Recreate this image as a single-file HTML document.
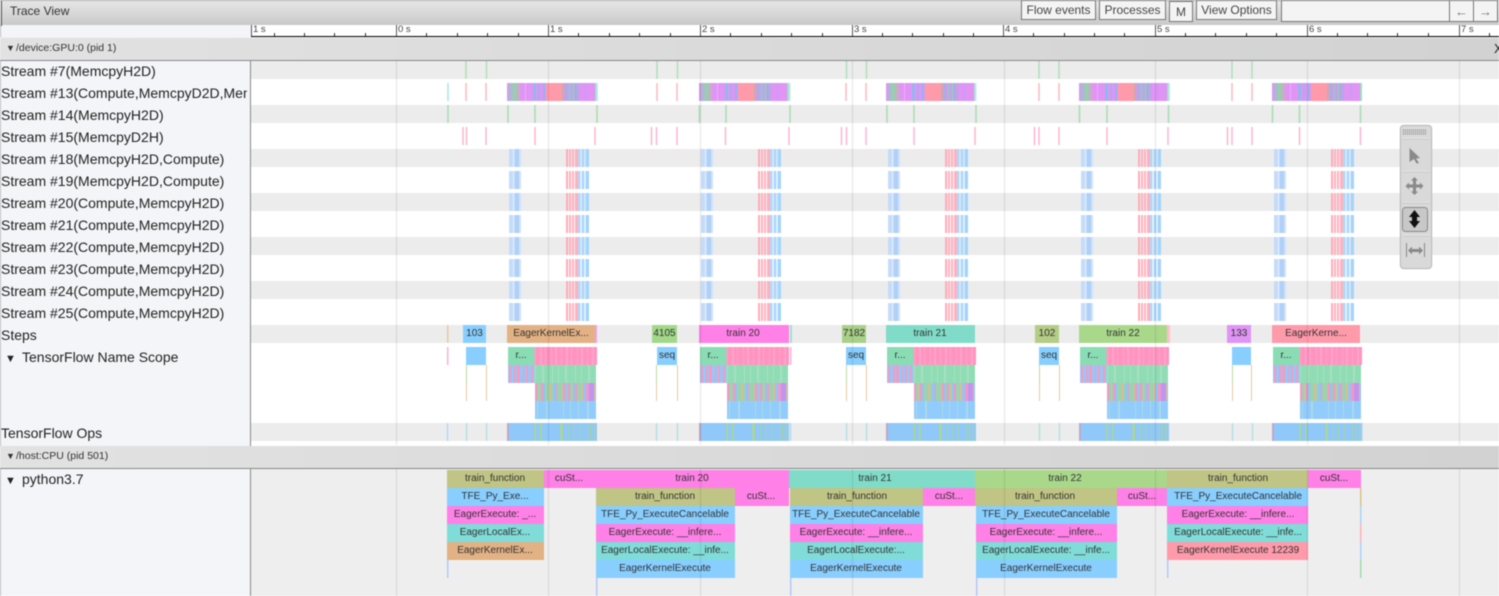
<!DOCTYPE html>
<html><head><meta charset="utf-8"><title>Trace View</title>
<style>
html,body{margin:0;padding:0;width:1499px;height:596px;overflow:hidden;background:#fff}
body{position:relative;font-family:"Liberation Sans",Arial,sans-serif;color:#222;filter:blur(.4px)}
.a{position:absolute}
#top{left:0;top:0;width:1499px;height:25px;background:linear-gradient(#e6e6e6,#c9c9c9);border-top:1px solid #aaa;box-sizing:border-box}
#top:before{content:"";position:absolute;left:1px;top:0;width:1px;height:25px;background:#555}
#title{left:10px;top:3px;font-size:12px;color:#333}
.b{position:absolute;box-sizing:border-box;background:#f4f4f4;border:1px solid #777;font-size:13px;color:#444;text-align:center;line-height:15px}
#left{left:0;top:25px;width:251px;height:571px;background:#f4f5f8;box-sizing:border-box;border-right:1px solid #888;border-left:1px solid #bbb}
.l{position:absolute;left:1px;font-size:14px;line-height:16px;color:#222;white-space:nowrap;width:246px;overflow:hidden}
.h{position:absolute;left:0;width:1499px;height:23px;background:linear-gradient(90deg,#e2e2e2,#d2d2d2);border-bottom:1px solid #888;box-sizing:border-box;font-size:10.5px;line-height:20px;color:#333}
.h span{position:absolute;left:16px;top:0;white-space:nowrap}
.h span.t{left:6px;font-size:9px}
#pal{left:1400px;top:125px;width:32px;height:144px;box-sizing:border-box;background:#d9d9d9;border:1px solid #bdbdbd;border-radius:4px;box-shadow:0 0 1px #aaa}
svg{position:absolute;left:0;top:0}
svg text{font-family:"Liberation Sans",Arial,sans-serif;font-size:10px;fill:#333;text-anchor:middle}
</style></head><body>
<div class="a" id="left"></div>
<svg width="1499" height="596" viewBox="0 0 1499 596">
<defs>
<g id="s"><rect x="2" width="12" height="18" fill="#c4dcfa"/><rect x="6" width="1" height="18" fill="#e4eefc"/><rect x="8" width="4" height="18" fill="#b0d0f8"/><rect x="12.500" width="1" height="18" fill="#d8e6fb"/>
<path d="M59 9H71" stroke="#ffb2be" stroke-width="18" stroke-dasharray="2 1 2 1 2 1 3"/><rect x="60" width="1" height="18" fill="#ffa4b4"/><path d="M71 9H83" stroke="#b0d8fc" stroke-width="18" stroke-dasharray="2.500 1 3 1 2"/><rect x="79" width="3" height="18" fill="#a4d4fc"/></g>
<g id="sr"><use href="#s" y="149"/><use href="#s" y="171"/><use href="#s" y="193"/><use href="#s" y="215"/><use href="#s" y="237"/><use href="#s" y="259"/><use href="#s" y="281"/><use href="#s" y="303"/></g>
<g id="m">
<rect y="83" width="90" height="18" fill="#e094f6"/>
<rect x="1" y="83" width="2" height="18" fill="#c4a8e0"/><rect x="3" y="83" width="7" height="18" fill="#a8bcd0"/><rect x="6" y="83" width="3" height="18" fill="#98d0a8"/><rect x="10" y="83" width="3" height="18" fill="#c8b0c0"/>
<rect x="18" y="83" width="1" height="18" fill="#ecb0f8"/><rect x="26" y="83" width="3" height="18" fill="#94b8ec"/><rect x="31" y="83" width="2" height="18" fill="#b0a8ec"/><rect x="36" y="83" width="2" height="18" fill="#94b4ec"/>
<rect x="39" y="83" width="16" height="18" fill="#ff9aaa"/><rect x="55" y="83" width="2" height="18" fill="#c8aca4"/>
<path d="M58 92H72" stroke="#a4b0dc" stroke-width="18" stroke-dasharray="2 1 3 1 1 1 3 1 1"/><rect x="62" y="83" width="1" height="18" fill="#a8c8c0"/><rect x="66" y="83" width="1" height="18" fill="#a8c8c0"/>
<rect x="78" y="83" width="1" height="18" fill="#c0a0f0"/><rect x="88" y="83" width="2" height="18" fill="#a0dcc0"/>
<rect y="347" x="1" width="27" height="18" fill="#8adcb4"/>
<rect y="347" x="27.500" width="62.500" height="18" fill="#ff94c0"/>
<path d="M28 356H90" stroke="#ffa4c8" stroke-width="18" stroke-dasharray="1 4 2 3 1 5 1 3 2 4"/>
<rect y="365" x="1" width="27" height="18" fill="#96c8f8"/>
<path d="M2 374H27" stroke="#f09cc4" stroke-width="18" stroke-dasharray="2 3 2 1 3 3 1 2 2 3"/>
<rect y="365" x="27.500" width="61.500" height="18" fill="#90dcb4"/>
<path d="M28 374H89" stroke="#a4e2c0" stroke-width="18" stroke-dasharray="1 6 2 8 1 5"/>
<rect y="383" x="28" width="61" height="18" fill="#98d4b0"/>
<path d="M28 392H89" stroke="#f496c8" stroke-width="18" stroke-dasharray="2 4 3 5 1 3 4 6 2 3"/>
<path d="M32 392H89" stroke="#dcbc90" stroke-width="18" stroke-dasharray="1 9 2 11 1 8"/>
<path d="M36 392H89" stroke="#94c4f4" stroke-width="18" stroke-dasharray="2 8 3 9 2 6"/>
<path d="M82 392H87" stroke="#c094f0" stroke-width="18"/>
<rect y="401" x="28" width="61" height="18" fill="#92ccfc"/>
<path d="M30 410H89" stroke="#a8d8e8" stroke-width="18" stroke-dasharray="1 8 2 15 1 6 1 7"/>
<rect y="423" width="90" height="18" fill="#90c8fa"/>
<rect y="423" x="0" width="2" height="18" fill="#c0a8c8"/>
<path d="M27 432H29M33 432H35M53 432H56M61 432H62M66 432H67M72 432H73M80 432H81M83 432H84M87 432H88" stroke="#a8d4a0" stroke-width="18"/>
</g>
</defs>
<!-- row bands -->
<g fill="#ececec"><rect x="251" y="61" width="1248" height="18"/><rect x="251" y="105" width="1248" height="18"/><rect x="251" y="149" width="1248" height="18"/><rect x="251" y="193" width="1248" height="18"/><rect x="251" y="237" width="1248" height="18"/><rect x="251" y="281" width="1248" height="18"/><rect x="251" y="325" width="1248" height="18"/><rect x="251" y="423" width="1248" height="18"/><rect x="251" y="469" width="1248" height="127" fill="#eee"/></g>
<!-- bursts -->
<use href="#sr" x="507"/><use href="#sr" x="699"/><use href="#sr" x="886"/><use href="#sr" x="1079"/><use href="#sr" x="1272"/>
<use href="#m" x="507"/><use href="#m" x="699"/><use href="#m" x="886"/><use href="#m" x="1079"/><use href="#m" x="1272"/>
<!-- stream 7 -->
<path d="M466 61V79M486.500 61V79M657 61V79M677.500 61V79M846.500 61V79M866.500 61V79M1039 61V79M1059 61V79M1232 61V79M1252 61V79" stroke="#b0e0ba" stroke-width="1.500"/>
<!-- stream 13 -->
<path d="M466 83V101M486 83V101M657 83V101M677 83V101M846 83V101M866 83V101M1039 83V101M1059 83V101M1232 83V101M1252 83V101" stroke="#ffb8c0" stroke-width="1.500"/>
<path d="M448 83V101M597 83V101M789.500 83V101M975.500 83V101M1169 83V101" stroke="#b8e8e6" stroke-width="1.800"/>
<!-- stream 14 -->
<path d="M448 105V123M508 105V123M535 105V123M597 105V123M699.500 105V123M726 105V123M790 105V123M887 105V123M914 105V123M976 105V123M1079.500 105V123M1107 105V123M1168.500 105V123M1272.500 105V123M1299.500 105V123M1360.500 105V123" stroke="#b0deb8" stroke-width="1.800"/>
<!-- stream 15 -->
<path d="M463 127V145M466.500 127V145M486 127V145M535 127V145M595 127V145M651.500 127V145M656.500 127V145M677 127V145M725.500 127V145M789 127V145M841.500 127V145M846.500 127V145M866 127V145M914 127V145M975 127V145M1034.500 127V145M1039 127V145M1059 127V145M1107 127V145M1168 127V145M1227.500 127V145M1232 127V145M1252 127V145M1299.500 127V145M1360.500 127V145" stroke="#ffb4d0" stroke-width="1.500"/>
<!-- steps -->
<rect x="447" y="325" width="1.500" height="18" fill="#e8c8a4"/><rect x="595" y="325" width="2" height="18" fill="#f0a0e8"/><rect x="790" y="325" width="2" height="18" fill="#a0e0d0"/><rect x="1167" y="325" width="3" height="18" fill="#ffc0c8"/>
<rect x="463" y="325" width="23" height="18" fill="#88ceff"/><text x="474.500" y="336">103</text>
<rect x="507" y="325" width="88" height="18" fill="#e2b184"/><text x="551" y="336">EagerKernelEx...</text>
<rect x="652" y="325" width="25" height="18" fill="#a2d88a"/><text x="664.500" y="336">4105</text>
<rect x="699" y="325" width="90" height="18" fill="#ff80e6"/><text x="743" y="336">train 20</text>
<rect x="842" y="325" width="24" height="18" fill="#a9d088"/><text x="854" y="336">7182</text>
<rect x="886" y="325" width="89" height="18" fill="#80dcc8"/><text x="930" y="336">train 21</text>
<rect x="1035" y="325" width="24" height="18" fill="#b4cc84"/><text x="1047" y="336">102</text>
<rect x="1079" y="325" width="88" height="18" fill="#a9d88a"/><text x="1123" y="336">train 22</text>
<rect x="1227" y="325" width="24" height="18" fill="#e094f6"/><text x="1239" y="336">133</text>
<rect x="1272" y="325" width="88" height="18" fill="#ff9aaa"/><text x="1316" y="336">EagerKerne...</text>
<!-- name scope -->
<g fill="#88ceff"><rect x="466" y="347" width="20" height="18"/><rect x="657" y="347" width="20" height="18"/><rect x="846" y="347" width="20" height="18"/><rect x="1039" y="347" width="20" height="18"/><rect x="1232" y="347" width="19" height="18"/></g>
<rect x="447" y="347" width="1.500" height="18" fill="#ffb0d0"/><rect x="790" y="347" width="1.500" height="18" fill="#ffb0d0"/>
<path d="M466.500 365V383M656.500 365V383M846.500 365V383M1039.500 365V383M1232.500 365V383" stroke="#bcd8a0"/>
<path d="M466.500 383V401M656.500 383V401M846.500 383V401M1039.500 383V401M1232.500 383V401M486.500 365V401M677.500 365V401M866.500 365V401M1059.500 365V401M1251.500 365V401" stroke="#e8c8a0"/>
<g fill="#333"><text x="521" y="358">r...</text><text x="713" y="358">r...</text><text x="900" y="358">r...</text><text x="1093" y="358">r...</text><text x="1286" y="358">r...</text>
<text x="667" y="358">seq</text><text x="856" y="358">seq</text><text x="1049" y="358">seq</text></g>
<!-- ops small -->
<path d="M447.500 423V441M790.500 423V441M1362 423V441" stroke="#b0d4f4" stroke-width="1.300"/>
<path d="M466.500 423V441M486.500 423V441M656.500 423V441M677.500 423V441M846.500 423V441M866.500 423V441M1039.500 423V441M1059.500 423V441M1232.500 423V441M1252.500 423V441" stroke="#a8e0e0" stroke-width="1.200"/>
<!-- python -->
<rect x="447" y="470" width="97" height="18" fill="#c0c484"/><text x="495" y="481">train_function</text>
<rect x="544" y="470" width="51" height="18" fill="#ff80e6"/><text x="569" y="481">cuSt...</text>
<rect x="595" y="470" width="194" height="18" fill="#ff80e6"/><text x="692" y="481">train 20</text>
<rect x="789" y="470" width="186" height="18" fill="#80dcc8"/><text x="875" y="481">train 21</text>
<rect x="975" y="470" width="192" height="18" fill="#a9d88a"/><text x="1065" y="481">train 22</text>
<rect x="1167" y="470" width="141" height="18" fill="#c0c484"/><text x="1238" y="481">train_function</text>
<rect x="1308" y="470" width="53" height="18" fill="#ff80e6"/><text x="1334" y="481">cuSt...</text>
<!-- col 1 -->
<rect x="447" y="488" width="97" height="18" fill="#88ceff"/><text x="495" y="499">TFE_Py_Exe...</text>
<rect x="447" y="506" width="97" height="18" fill="#ff80e6"/><text x="495" y="517">EagerExecute: _...</text>
<rect x="447" y="524" width="97" height="18" fill="#80dcd8"/><text x="495" y="535">EagerLocalEx...</text>
<rect x="447" y="542" width="97" height="18" fill="#e2b184"/><text x="495" y="553">EagerKernelEx...</text>
<rect x="447" y="560" width="1.500" height="18" fill="#b4c8f8"/>
<!-- col 2 -->
<rect x="596" y="488" width="139" height="18" fill="#c0c484"/><text x="665" y="499">train_function</text>
<rect x="735" y="488" width="54" height="18" fill="#ff80e6"/><text x="761" y="499">cuSt...</text>
<rect x="596" y="506" width="139" height="18" fill="#88ceff"/><text x="665" y="517">TFE_Py_ExecuteCancelable</text>
<rect x="596" y="524" width="139" height="18" fill="#ff80e6"/><text x="665" y="535">EagerExecute: __infere...</text>
<rect x="596" y="542" width="139" height="18" fill="#80dcd8"/><text x="665" y="553">EagerLocalExecute: __infe...</text>
<rect x="596" y="560" width="139" height="18" fill="#88ceff"/><text x="665" y="571">EagerKernelExecute</text>
<rect x="596" y="578" width="1.500" height="18" fill="#b4c8f8"/>
<!-- col 3 -->
<rect x="790" y="488" width="133" height="18" fill="#c0c484"/><text x="857" y="499">train_function</text>
<rect x="923" y="488" width="52" height="18" fill="#ff80e6"/><text x="949" y="499">cuSt...</text>
<rect x="790" y="506" width="133" height="18" fill="#88ceff"/><text x="856" y="517">TFE_Py_ExecuteCancelable</text>
<rect x="790" y="524" width="133" height="18" fill="#ff80e6"/><text x="856" y="535">EagerExecute: __infere...</text>
<rect x="790" y="542" width="133" height="18" fill="#80dcd8"/><text x="856" y="553">EagerLocalExecute:...</text>
<rect x="790" y="560" width="133" height="18" fill="#88ceff"/><text x="856" y="571">EagerKernelExecute</text>
<rect x="790" y="578" width="1.500" height="18" fill="#b4c8f8"/>
<!-- col 4 -->
<rect x="975" y="488" width="142" height="18" fill="#c0c484"/><text x="1045" y="499">train_function</text>
<rect x="1117" y="488" width="50" height="18" fill="#ff80e6"/><text x="1142" y="499">cuSt...</text>
<rect x="976" y="506" width="141" height="18" fill="#88ceff"/><text x="1046" y="517">TFE_Py_ExecuteCancelable</text>
<rect x="976" y="524" width="141" height="18" fill="#ff80e6"/><text x="1046" y="535">EagerExecute: __infere...</text>
<rect x="976" y="542" width="141" height="18" fill="#80dcd8"/><text x="1046" y="553">EagerLocalExecute: __infe...</text>
<rect x="976" y="560" width="141" height="18" fill="#88ceff"/><text x="1046" y="571">EagerKernelExecute</text>
<rect x="976" y="578" width="1.500" height="18" fill="#b4c8f8"/>
<!-- col 5 -->
<rect x="1167" y="488" width="141" height="18" fill="#88ceff"/><text x="1238" y="499">TFE_Py_ExecuteCancelable</text>
<rect x="1167" y="506" width="141" height="18" fill="#ff80e6"/><text x="1238" y="517">EagerExecute: __infere...</text>
<rect x="1167" y="524" width="141" height="18" fill="#80dcd8"/><text x="1238" y="535">EagerLocalExecute: __infe...</text>
<rect x="1167" y="542" width="141" height="18" fill="#ff9aaa"/><text x="1238" y="553">EagerKernelExecute 12239</text>
<rect x="1167" y="560" width="1.500" height="18" fill="#b4c8f8"/>
<rect x="1360" y="488" width="1.500" height="18" fill="#d8c484"/><rect x="1360" y="506" width="1.500" height="18" fill="#a8d4f8"/><rect x="1360" y="524" width="1.500" height="18" fill="#ffb0b8"/><rect x="1360" y="542" width="1.500" height="18" fill="#a8d4f8"/><rect x="1360" y="560" width="1.500" height="18" fill="#a0dca8"/>
<!-- grid -->
<path d="M396.500 61V445M548.500 61V445M700.500 61V445M852.500 61V445M1004.500 61V445M1155.500 61V445M1307.500 61V445M1459.500 61V445M396.500 469V596M548.500 469V596M700.500 469V596M852.500 469V596M1004.500 469V596M1155.500 469V596M1307.500 469V596M1459.500 469V596" stroke="#000" stroke-opacity=".07" stroke-width="1.500"/>
</svg>
<!-- headers -->
<div class="h" style="top:38px"><span class="t">▼</span><span>/device:GPU:0 (pid 1)</span><span style="left:1494px;font-size:13px;top:1px;color:#222">X</span></div>
<div class="h" style="top:446px"><span class="t">▼</span><span>/host:CPU (pid 501)</span></div>
<div class="l" style="top:63px">Stream #7(MemcpyH2D)</div>
<div class="l" style="top:85px">Stream #13(Compute,MemcpyD2D,MemcpyH2D)</div>
<div class="l" style="top:107px">Stream #14(MemcpyH2D)</div>
<div class="l" style="top:129px">Stream #15(MemcpyD2H)</div>
<div class="l" style="top:151px">Stream #18(MemcpyH2D,Compute)</div>
<div class="l" style="top:173px">Stream #19(MemcpyH2D,Compute)</div>
<div class="l" style="top:195px">Stream #20(Compute,MemcpyH2D)</div>
<div class="l" style="top:217px">Stream #21(Compute,MemcpyH2D)</div>
<div class="l" style="top:239px">Stream #22(Compute,MemcpyH2D)</div>
<div class="l" style="top:261px">Stream #23(Compute,MemcpyH2D)</div>
<div class="l" style="top:283px">Stream #24(Compute,MemcpyH2D)</div>
<div class="l" style="top:305px">Stream #25(Compute,MemcpyH2D)</div>
<div class="l" style="top:327px">Steps</div>
<div class="l" style="top:349px;left:5px"><span style="font-size:11px;display:inline-block;width:17px">▼</span>TensorFlow Name Scope</div>
<div class="l" style="top:425px">TensorFlow Ops</div>
<div class="l" style="top:471px;left:5px"><span style="font-size:11px;display:inline-block;width:17px">▼</span>python3.7</div>
<!-- ruler -->
<svg width="1499" height="40" viewBox="0 0 1499 40" style="top:0">
<rect x="251" y="25" width="1248" height="12" fill="#fff"/>
<rect x="1" y="25" width="250" height="12" fill="#f4f5f8"/>
<rect x="0" y="37" width="1499" height="1" fill="#f0f0f0"/>
<path d="M251 36.500H1499" stroke="#000" stroke-width="1"/>
<path d="M251.500 25V36M396.500 25V36M548.500 25V36M700.500 25V36M852.500 25V36M1003.500 25V36M1155.500 25V36M1307.500 25V36M1459.500 25V36" stroke="#555"/>
<path d="M274.500 33V36M304.500 33V36M334.500 33V36M365.500 33V36M426.500 33V36M457.500 33V36M487.500 33V36M518.500 33V36M578.500 33V36M609.500 33V36M639.500 33V36M670.500 33V36M730.500 33V36M761.500 33V36M791.500 33V36M822.500 33V36M882.500 33V36M912.500 33V36M943.500 33V36M973.500 33V36M1033.500 33V36M1064.500 33V36M1094.500 33V36M1124.500 33V36M1185.500 33V36M1215.500 33V36M1246.500 33V36M1276.500 33V36M1337.500 33V36M1367.500 33V36M1397.500 33V36M1428.500 33V36M1489.500 33V36" stroke="#333"/>
<g>
<text x="253" y="32" style="font-size:9.500px;text-anchor:start;fill:#444">1 s</text><text x="398" y="32" style="font-size:9.500px;text-anchor:start;fill:#444">0 s</text><text x="550" y="32" style="font-size:9.500px;text-anchor:start;fill:#444">1 s</text><text x="702" y="32" style="font-size:9.500px;text-anchor:start;fill:#444">2 s</text><text x="854" y="32" style="font-size:9.500px;text-anchor:start;fill:#444">3 s</text><text x="1005" y="32" style="font-size:9.500px;text-anchor:start;fill:#444">4 s</text><text x="1157" y="32" style="font-size:9.500px;text-anchor:start;fill:#444">5 s</text><text x="1309" y="32" style="font-size:9.500px;text-anchor:start;fill:#444">6 s</text><text x="1461" y="32" style="font-size:9.500px;text-anchor:start;fill:#444">7 s</text></g>
</svg>
<!-- top bar -->
<div class="a" id="top"><div class="a" id="title">Trace View</div></div>
<div class="b" style="left:1021px;top:0;width:75px;height:20px;font-size:12px;line-height:18px">Flow events</div>
<div class="b" style="left:1099px;top:0;width:67px;height:20px;font-size:12px;line-height:18px">Processes</div>
<div class="b" style="left:1169px;top:1px;width:24px;height:21px;font-size:12px;line-height:20px">M</div>
<div class="b" style="left:1196px;top:0;width:81px;height:20px;font-size:12px;line-height:18px">View Options</div>
<div class="b" style="left:1281px;top:0;width:217px;height:22px"></div>
<div class="b" style="left:1449px;top:0;width:25px;height:22px;font-size:13px;line-height:22px;color:#777">←</div>
<div class="b" style="left:1473px;top:0;width:25px;height:22px;font-size:13px;line-height:22px;color:#777">→</div>
<!-- palette -->
<div class="a" id="pal">
<svg width="30" height="142" viewBox="0 0 30 142">
<path d="M2 4H25M2 6H25M2 8H25" stroke="#777" stroke-width="1" stroke-dasharray="1 1"/>
<path d="M1 12.500H29M1 45.500H29M1 76.500H29M1 109.500H29" stroke="#f4f4f4"/>
<path d="M1 13H29M1 46H29M1 77H29M1 110H29" stroke="#aaa" stroke-width=".5"/>
<path d="M8.500 22L19 32L15 32.500L18 37L15.500 37.500L13 33L8.500 36Z" fill="#8a8a8a"/>
<path d="M13.500 51L17 54.500H15V58.500H19V56.500L22.500 60L19 63.500V61.500H15V65.500H17L13.500 69L10 65.500H12V61.500H8V63.500L4.500 60L8 56.500V58.500H12V54.500H10Z" fill="#8a8a8a"/>
<rect x="1.500" y="81.500" width="25" height="24" rx="3" fill="#c8c8c8" stroke="#888"/>
<path d="M13.500 84L19 91H16V95H19L13.500 102L8 95H11V91H8Z" fill="#111"/>
<path d="M5.500 117V131M23.500 117V131" stroke="#888"/>
<path d="M7 124.500L11 120.500V123H18V120.500L22 124.500L18 128.500V126H11V128.500Z" fill="#8a8a8a"/>
</svg>
</div>
</body></html>
